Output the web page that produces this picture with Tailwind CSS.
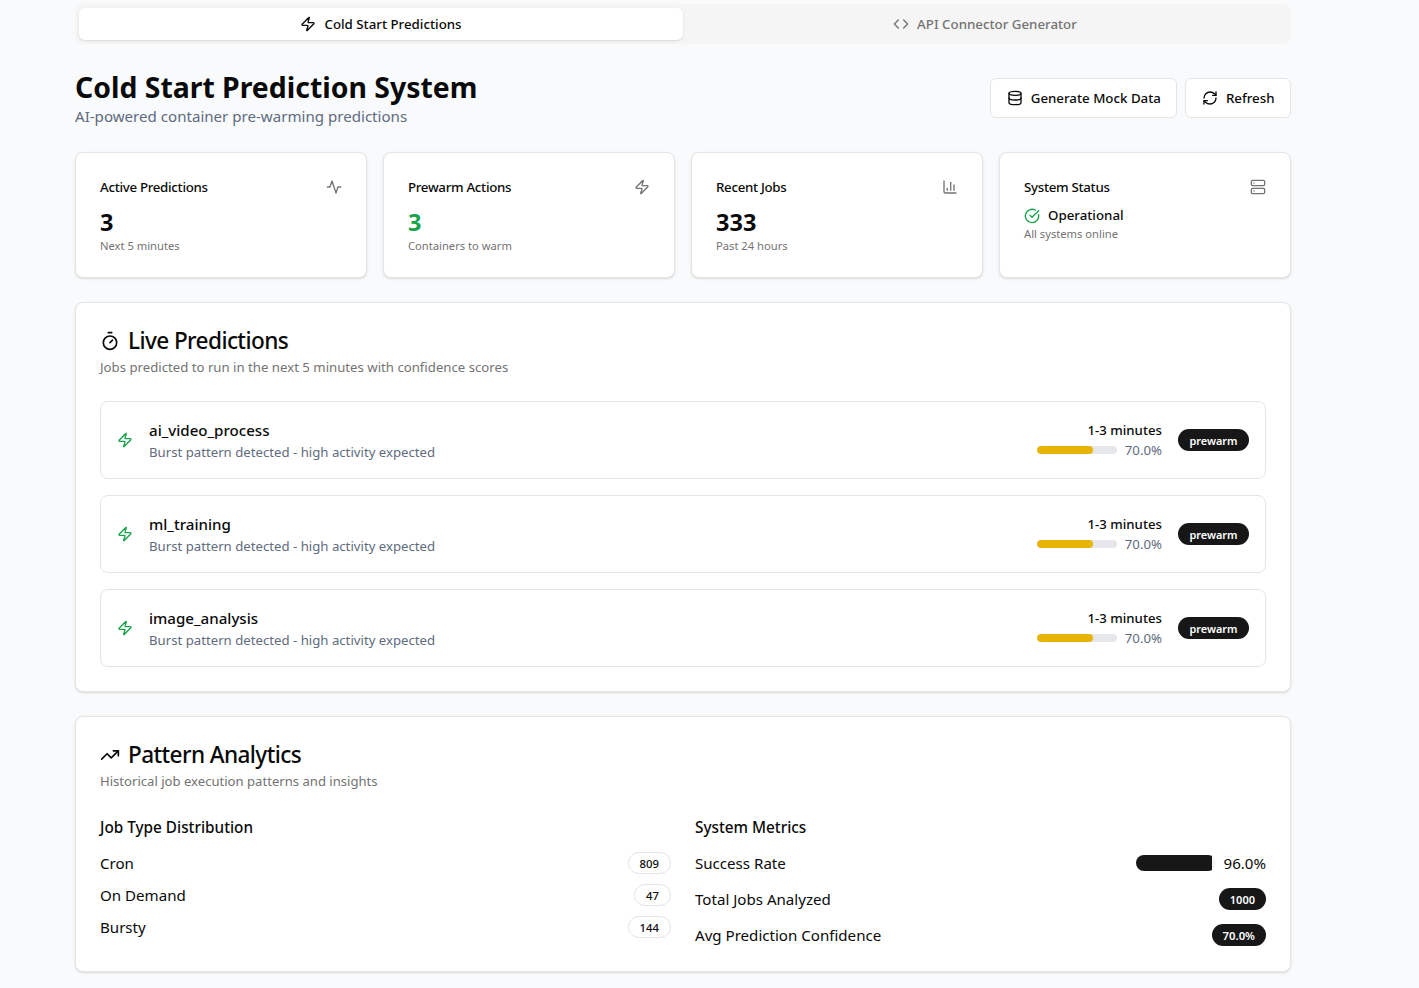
<!DOCTYPE html>
<html lang="en">
<head>
    <meta charset="UTF-8">
    <meta name="viewport" content="width=device-width, initial-scale=1.0">
    <title>Cold Start Prediction System</title>
    <script src="https://cdn.jsdelivr.net/npm/@tailwindcss/browser@4"></script>
</head>
<body class="bg-[#f8fafc] min-h-screen font-['Noto_Sans',sans-serif] text-[#0a0a0a]">
    <div class="w-[1216px] ml-[75px] pt-1 pb-4">
        <!-- Tabs -->
        <div class="grid grid-cols-2 h-10 p-1 rounded-lg bg-[#f5f5f5]">
            <div class="flex items-center justify-center gap-2 rounded-md bg-white shadow-sm text-[13.3px] font-medium">
                <svg class="w-4 h-4" fill="none" stroke="currentColor" stroke-width="2" stroke-linecap="round" stroke-linejoin="round" viewBox="0 0 24 24"><path d="M4 14a1 1 0 0 1-.78-1.63l9.9-10.2a.5.5 0 0 1 .86.46l-1.92 6.02A1 1 0 0 0 13 10h7a1 1 0 0 1 .78 1.63l-9.9 10.2a.5.5 0 0 1-.86-.46l1.92-6.02A1 1 0 0 0 11 14z"/></svg>
                <span class="pt-[2px]">Cold Start Predictions</span>
            </div>
            <div class="flex items-center justify-center gap-2 text-[13.3px] font-medium text-[#737373]">
                <svg class="w-4 h-4" fill="none" stroke="currentColor" stroke-width="2" stroke-linecap="round" stroke-linejoin="round" viewBox="0 0 24 24"><path d="m16 18 6-6-6-6"/><path d="m8 6-6 6 6 6"/></svg>
                <span class="pt-[2px]">API Connector Generator</span>
            </div>
        </div>

        <!-- Header -->
        <div class="flex items-center justify-between mt-6 h-[60px]">
            <div>
                <h1 class="text-[28.4px] leading-9 font-bold">Cold Start Prediction System</h1>
                <p class="text-[15.1px] text-[#5f6b7e] leading-[22px]">AI-powered container pre-warming predictions</p>
            </div>
            <div class="flex gap-2">
                <button class="flex items-center gap-2 h-10 px-[15.5px] rounded-md border border-[#e5e5e5] bg-white text-[13.3px] font-medium">
                    <svg class="w-4 h-4" fill="none" stroke="currentColor" stroke-width="2" stroke-linecap="round" stroke-linejoin="round" viewBox="0 0 24 24"><ellipse cx="12" cy="5" rx="9" ry="3"/><path d="M3 5V19A9 3 0 0 0 21 19V5"/><path d="M3 12A9 3 0 0 0 21 12"/></svg>
                    <span class="pt-[2px]">Generate Mock Data</span>
                </button>
                <button class="flex items-center gap-2 h-10 px-[15.5px] rounded-md border border-[#e5e5e5] bg-white text-[13.3px] font-medium">
                    <svg class="w-4 h-4" fill="none" stroke="currentColor" stroke-width="2" stroke-linecap="round" stroke-linejoin="round" viewBox="0 0 24 24"><path d="M3 12a9 9 0 0 1 9-9 9.75 9.75 0 0 1 6.74 2.74L21 8"/><path d="M21 3v5h-5"/><path d="M21 12a9 9 0 0 1-9 9 9.75 9.75 0 0 1-6.74-2.74L3 16"/><path d="M8 16H3v5"/></svg>
                    <span class="pt-[2px]">Refresh</span>
                </button>
            </div>
        </div>

        <!-- Stat cards -->
        <div class="grid grid-cols-4 gap-4 mt-6">
            <div class="h-[126px] rounded-lg border border-[#e5e5e5] bg-white shadow-sm px-6 pt-6">
                <div class="flex items-start justify-between h-5">
                    <span class="text-[13.3px] leading-[21px] font-medium tracking-[-0.3px]">Active Predictions</span>
                    <svg class="w-4 h-4 mt-[2px] text-[#737373]" fill="none" stroke="currentColor" stroke-width="2" stroke-linecap="round" stroke-linejoin="round" viewBox="0 0 24 24"><path d="M22 12h-4l-3 9L9 3l-3 9H2"/></svg>
                </div>
                <div class="text-[23.5px] leading-8 font-bold mt-[9px]">3</div>
                <div class="text-[11.2px] leading-4 text-[#737373]">Next 5 minutes</div>
            </div>
            <div class="h-[126px] rounded-lg border border-[#e5e5e5] bg-white shadow-sm px-6 pt-6">
                <div class="flex items-start justify-between h-5">
                    <span class="text-[13.3px] leading-[21px] font-medium tracking-[-0.3px]">Prewarm Actions</span>
                    <svg class="w-4 h-4 mt-[2px] text-[#737373]" fill="none" stroke="currentColor" stroke-width="2" stroke-linecap="round" stroke-linejoin="round" viewBox="0 0 24 24"><path d="M4 14a1 1 0 0 1-.78-1.63l9.9-10.2a.5.5 0 0 1 .86.46l-1.92 6.02A1 1 0 0 0 13 10h7a1 1 0 0 1 .78 1.63l-9.9 10.2a.5.5 0 0 1-.86-.46l1.92-6.02A1 1 0 0 0 11 14z"/></svg>
                </div>
                <div class="text-[23.5px] leading-8 font-bold mt-[9px] text-[#16a34a]">3</div>
                <div class="text-[11.2px] leading-4 text-[#737373]">Containers to warm</div>
            </div>
            <div class="h-[126px] rounded-lg border border-[#e5e5e5] bg-white shadow-sm px-6 pt-6">
                <div class="flex items-start justify-between h-5">
                    <span class="text-[13.3px] leading-[21px] font-medium tracking-[-0.3px]">Recent Jobs</span>
                    <svg class="w-4 h-4 mt-[2px] text-[#737373]" fill="none" stroke="currentColor" stroke-width="2" stroke-linecap="round" stroke-linejoin="round" viewBox="0 0 24 24"><path d="M3 3v16a2 2 0 0 0 2 2h16"/><path d="M18 17V9"/><path d="M13 17V5"/><path d="M8 17v-3"/></svg>
                </div>
                <div class="text-[23.5px] leading-8 font-bold mt-[9px]">333</div>
                <div class="text-[11.2px] leading-4 text-[#737373]">Past 24 hours</div>
            </div>
            <div class="h-[126px] rounded-lg border border-[#e5e5e5] bg-white shadow-sm px-6 pt-6">
                <div class="flex items-start justify-between h-5">
                    <span class="text-[13.3px] leading-[21px] font-medium tracking-[-0.3px]">System Status</span>
                    <svg class="w-4 h-4 mt-[2px] text-[#737373]" fill="none" stroke="currentColor" stroke-width="2" stroke-linecap="round" stroke-linejoin="round" viewBox="0 0 24 24"><rect width="20" height="8" x="2" y="2" rx="2" ry="2"/><rect width="20" height="8" x="2" y="14" rx="2" ry="2"/><line x1="6" x2="6.01" y1="6" y2="6"/><line x1="6" x2="6.01" y1="18" y2="18"/></svg>
                </div>
                <div class="flex items-center gap-2 mt-[9px] h-5">
                    <svg class="w-4 h-4 text-[#16a34a]" fill="none" stroke="currentColor" stroke-width="2" stroke-linecap="round" stroke-linejoin="round" viewBox="0 0 24 24"><path d="M21.801 10A10 10 0 1 1 17 3.335"/><path d="m9 11 3 3L22 4"/></svg>
                    <span class="text-[13.3px] font-medium">Operational</span>
                </div>
                <div class="text-[11.2px] leading-4 text-[#737373]">All systems online</div>
            </div>
        </div>

        <!-- Live predictions -->
        <div class="mt-6 rounded-lg border border-[#e5e5e5] bg-white shadow-sm p-6">
            <div class="flex items-center gap-2 h-7">
                <svg class="w-5 h-5" fill="none" stroke="currentColor" stroke-width="2" stroke-linecap="round" stroke-linejoin="round" viewBox="0 0 24 24"><line x1="10" x2="14" y1="2" y2="2"/><line x1="12" x2="15" y1="14" y2="11"/><circle cx="12" cy="14" r="8"/></svg>
                <h2 class="text-[22.6px] leading-7 font-medium tracking-[-0.6px]">Live Predictions</h2>
            </div>
            <p class="text-[13.2px] leading-5 text-[#737373] mt-[2px]">Jobs predicted to run in the next 5 minutes with confidence scores</p>

            <div class="flex flex-col gap-4 mt-6">
                <div class="flex items-center justify-between h-[78px] rounded-lg border border-[#e5e5e5] px-4">
                    <div class="flex items-center gap-4">
                        <svg class="w-4 h-4 text-[#16a34a]" fill="none" stroke="currentColor" stroke-width="2" stroke-linecap="round" stroke-linejoin="round" viewBox="0 0 24 24"><path d="M4 14a1 1 0 0 1-.78-1.63l9.9-10.2a.5.5 0 0 1 .86.46l-1.92 6.02A1 1 0 0 0 13 10h7a1 1 0 0 1 .78 1.63l-9.9 10.2a.5.5 0 0 1-.86-.46l1.92-6.02A1 1 0 0 0 11 14z"/></svg>
                        <div>
                            <div class="text-[15.1px] font-medium leading-6">ai_video_process</div>
                            <div class="text-[13.2px] leading-5 text-[#5f6b7e]">Burst pattern detected - high activity expected</div>
                        </div>
                    </div>
                    <div class="flex items-center gap-4">
                        <div class="flex flex-col items-end">
                            <div class="text-[13.2px] leading-5 font-medium">1-3 minutes</div>
                            <div class="flex items-center gap-2">
                                <div class="w-20 h-2 rounded-full bg-[#e5e7eb] overflow-hidden"><div class="h-full w-[70%] bg-[#eab308] rounded-full"></div></div>
                                <span class="text-[13.2px] leading-5 text-[#5f6b7e]">70.0%</span>
                            </div>
                        </div>
                        <span class="px-[11.5px] pt-[2px] h-[22px] flex items-center rounded-full bg-[#171717] text-white text-[10.9px] font-semibold">prewarm</span>
                    </div>
                </div>
                <div class="flex items-center justify-between h-[78px] rounded-lg border border-[#e5e5e5] px-4">
                    <div class="flex items-center gap-4">
                        <svg class="w-4 h-4 text-[#16a34a]" fill="none" stroke="currentColor" stroke-width="2" stroke-linecap="round" stroke-linejoin="round" viewBox="0 0 24 24"><path d="M4 14a1 1 0 0 1-.78-1.63l9.9-10.2a.5.5 0 0 1 .86.46l-1.92 6.02A1 1 0 0 0 13 10h7a1 1 0 0 1 .78 1.63l-9.9 10.2a.5.5 0 0 1-.86-.46l1.92-6.02A1 1 0 0 0 11 14z"/></svg>
                        <div>
                            <div class="text-[15.1px] font-medium leading-6">ml_training</div>
                            <div class="text-[13.2px] leading-5 text-[#5f6b7e]">Burst pattern detected - high activity expected</div>
                        </div>
                    </div>
                    <div class="flex items-center gap-4">
                        <div class="flex flex-col items-end">
                            <div class="text-[13.2px] leading-5 font-medium">1-3 minutes</div>
                            <div class="flex items-center gap-2">
                                <div class="w-20 h-2 rounded-full bg-[#e5e7eb] overflow-hidden"><div class="h-full w-[70%] bg-[#eab308] rounded-full"></div></div>
                                <span class="text-[13.2px] leading-5 text-[#5f6b7e]">70.0%</span>
                            </div>
                        </div>
                        <span class="px-[11.5px] pt-[2px] h-[22px] flex items-center rounded-full bg-[#171717] text-white text-[10.9px] font-semibold">prewarm</span>
                    </div>
                </div>
                <div class="flex items-center justify-between h-[78px] rounded-lg border border-[#e5e5e5] px-4">
                    <div class="flex items-center gap-4">
                        <svg class="w-4 h-4 text-[#16a34a]" fill="none" stroke="currentColor" stroke-width="2" stroke-linecap="round" stroke-linejoin="round" viewBox="0 0 24 24"><path d="M4 14a1 1 0 0 1-.78-1.63l9.9-10.2a.5.5 0 0 1 .86.46l-1.92 6.02A1 1 0 0 0 13 10h7a1 1 0 0 1 .78 1.63l-9.9 10.2a.5.5 0 0 1-.86-.46l1.92-6.02A1 1 0 0 0 11 14z"/></svg>
                        <div>
                            <div class="text-[15.1px] font-medium leading-6">image_analysis</div>
                            <div class="text-[13.2px] leading-5 text-[#5f6b7e]">Burst pattern detected - high activity expected</div>
                        </div>
                    </div>
                    <div class="flex items-center gap-4">
                        <div class="flex flex-col items-end">
                            <div class="text-[13.2px] leading-5 font-medium">1-3 minutes</div>
                            <div class="flex items-center gap-2">
                                <div class="w-20 h-2 rounded-full bg-[#e5e7eb] overflow-hidden"><div class="h-full w-[70%] bg-[#eab308] rounded-full"></div></div>
                                <span class="text-[13.2px] leading-5 text-[#5f6b7e]">70.0%</span>
                            </div>
                        </div>
                        <span class="px-[11.5px] pt-[2px] h-[22px] flex items-center rounded-full bg-[#171717] text-white text-[10.9px] font-semibold">prewarm</span>
                    </div>
                </div>
            </div>
        </div>

        <!-- Pattern analytics -->
        <div class="mt-6 h-[256px] rounded-lg border border-[#e5e5e5] bg-white shadow-sm p-6">
            <div class="flex items-center gap-2 h-7">
                <svg class="w-5 h-5" fill="none" stroke="currentColor" stroke-width="2" stroke-linecap="round" stroke-linejoin="round" viewBox="0 0 24 24"><path d="M16 7h6v6"/><path d="m22 7-8.5 8.5-5-5L2 17"/></svg>
                <h2 class="text-[22.6px] leading-7 font-medium tracking-[-0.6px]">Pattern Analytics</h2>
            </div>
            <p class="text-[13.1px] leading-5 text-[#737373] mt-[2px]">Historical job execution patterns and insights</p>

            <div class="grid grid-cols-2 gap-6 mt-6 text-[15.1px]">
                <div>
                    <h3 class="text-[15.3px] font-medium leading-6">Job Type Distribution</h3>
                    <div class="flex flex-col gap-2 mt-3">
                        <div class="flex items-center justify-between h-6"><span>Cron</span><span class="flex items-center h-[22px] pt-[2px] px-[11px] rounded-full border border-[#e5e5e5] text-[11.3px] font-medium">809</span></div>
                        <div class="flex items-center justify-between h-6"><span>On Demand</span><span class="flex items-center h-[22px] pt-[2px] px-[11px] rounded-full border border-[#e5e5e5] text-[11.3px] font-medium">47</span></div>
                        <div class="flex items-center justify-between h-6"><span>Bursty</span><span class="flex items-center h-[22px] pt-[2px] px-[11px] rounded-full border border-[#e5e5e5] text-[11.3px] font-medium">144</span></div>
                    </div>
                </div>
                <div>
                    <h3 class="text-[15.3px] font-medium leading-6">System Metrics</h3>
                    <div class="flex flex-col gap-3 mt-3">
                        <div class="flex items-center justify-between h-6">
                            <span>Success Rate</span>
                            <div class="flex items-center gap-2">
                                <div class="w-20 h-4 rounded-full bg-[#f5f5f5] overflow-hidden"><div class="h-full w-[96%] bg-[#171717]"></div></div>
                                <span>96.0%</span>
                            </div>
                        </div>
                        <div class="flex items-center justify-between h-6">
                            <span>Total Jobs Analyzed</span>
                            <span class="flex items-center h-[22px] pt-[2px] px-[11px] rounded-full bg-[#171717] text-white text-[11px] font-semibold">1000</span>
                        </div>
                        <div class="flex items-center justify-between h-6">
                            <span>Avg Prediction Confidence</span>
                            <span class="flex items-center h-[22px] pt-[2px] px-[11px] rounded-full bg-[#171717] text-white text-[11.3px] font-semibold">70.0%</span>
                        </div>
                    </div>
                </div>
            </div>
        </div>
    </div>
</body>
</html>
